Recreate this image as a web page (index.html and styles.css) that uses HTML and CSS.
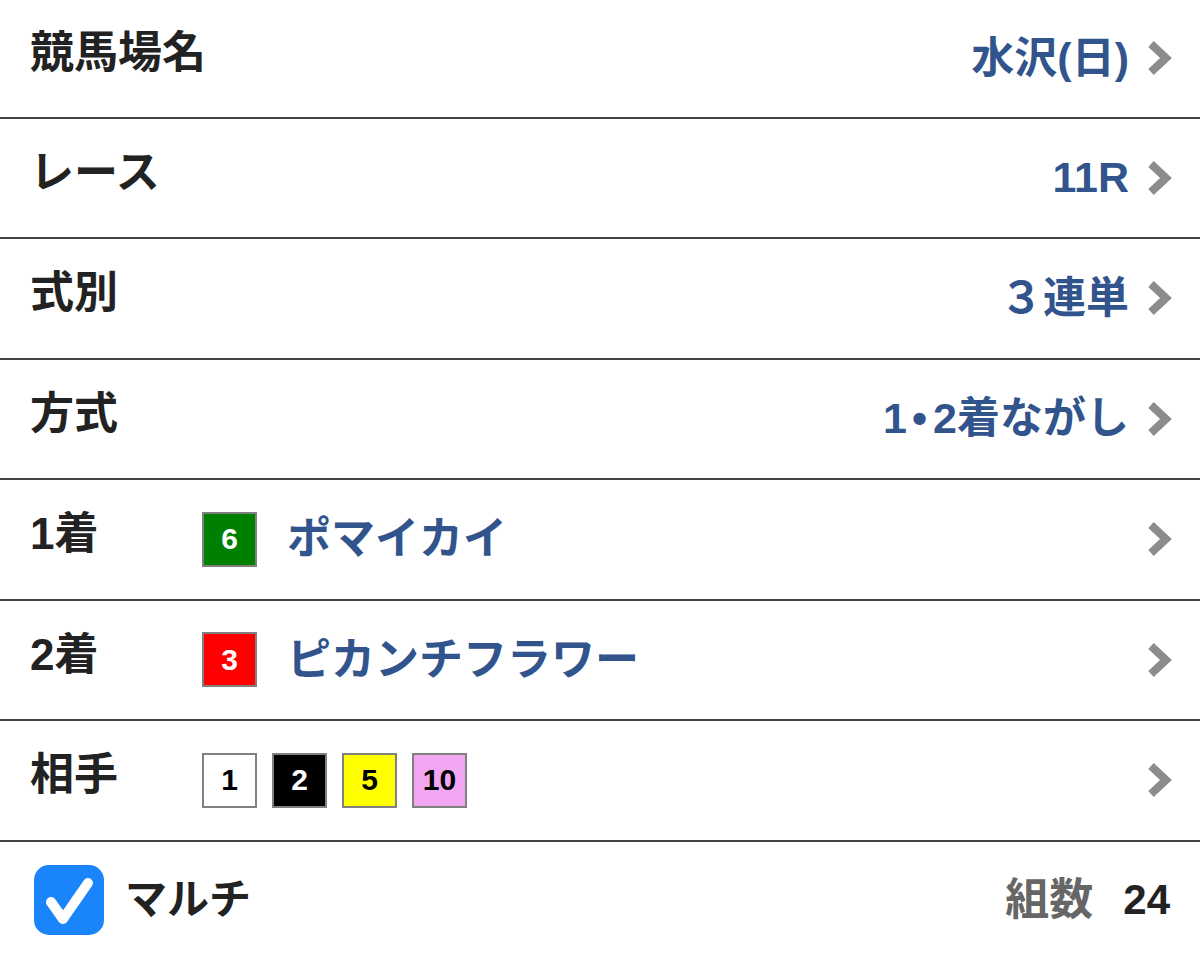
FILE: index.html
```html
<!DOCTYPE html>
<html lang="ja">
<head>
<meta charset="utf-8">
<title>投票内容</title>
<link rel="stylesheet" href="styles.css">
</head>
<body>
<div class="list">
  <div class="row row-first">
    <div class="label">競馬場名</div>
    <div class="value">水沢(日)</div>
    <svg class="chev" viewBox="0 0 27 36"><polyline points="5,4 20,18 5,32"/></svg>
  </div>
  <div class="row">
    <div class="label">レース</div>
    <div class="value">11R</div>
    <svg class="chev" viewBox="0 0 27 36"><polyline points="5,4 20,18 5,32"/></svg>
  </div>
  <div class="row">
    <div class="label">式別</div>
    <div class="value">３連単</div>
    <svg class="chev" viewBox="0 0 27 36"><polyline points="5,4 20,18 5,32"/></svg>
  </div>
  <div class="row">
    <div class="label">方式</div>
    <div class="value">1<span class="dot">•</span>2着ながし</div>
    <svg class="chev" viewBox="0 0 27 36"><polyline points="5,4 20,18 5,32"/></svg>
  </div>
  <div class="row">
    <div class="label">1着</div>
    <div class="horse">
      <span class="badge b-green">6</span>
      <span class="name">ポマイカイ</span>
    </div>
    <svg class="chev" viewBox="0 0 27 36"><polyline points="5,4 20,18 5,32"/></svg>
  </div>
  <div class="row">
    <div class="label">2着</div>
    <div class="horse">
      <span class="badge b-red">3</span>
      <span class="name">ピカンチフラワー</span>
    </div>
    <svg class="chev" viewBox="0 0 27 36"><polyline points="5,4 20,18 5,32"/></svg>
  </div>
  <div class="row">
    <div class="label">相手</div>
    <div class="badges">
      <span class="badge b-white">1</span>
      <span class="badge b-black">2</span>
      <span class="badge b-yellow">5</span>
      <span class="badge b-pink">10</span>
    </div>
    <svg class="chev" viewBox="0 0 27 36"><polyline points="5,4 20,18 5,32"/></svg>
  </div>
  <div class="row row-last">
    <div class="check">
      <svg viewBox="0 0 70 70"><rect x="0" y="0" width="70" height="70" rx="15" ry="15" fill="#1a84fb"/><polyline points="17,37 29,54 54,18" fill="none" stroke="#fff" stroke-width="10" stroke-linecap="round" stroke-linejoin="round"/></svg>
    </div>
    <div class="multi">マルチ</div>
    <div class="count"><span class="count-label">組数</span><span class="count-num">24</span></div>
  </div>
</div>
</body>
</html>
```
FILE: styles.css
```css
html, body {
  margin: 0;
  padding: 0;
  background: #ffffff;
}
body {
  font-family: "Liberation Sans", "Noto Sans CJK JP", sans-serif;
  font-weight: bold;
  color: #222222;
  width: 1200px;
  height: 957px;
  overflow: hidden;
}
.list {
  display: flex;
  flex-direction: column;
}
.row {
  display: flex;
  align-items: center;
  height: 120.5px;
  box-sizing: border-box;
  border-bottom: 2px solid #434343;
  padding: 0 27px 0 30px;
}
.row-first {
  height: 118.5px;
}
.row-last {
  border-bottom: none;
  height: 117.5px;
  padding: 0 30px 0 34px;
}
.label {
  font-size: 44px;
  line-height: 1;
  width: 172px;
  flex: none;
  white-space: nowrap;
  margin-bottom: 10px;
  color: #222222;
}
.value {
  margin-left: auto;
  font-size: 43px;
  line-height: 1;
  color: #32548c;
  white-space: nowrap;
}
.dot {
  padding: 0 6px 0 5px;
}
.chev {
  width: 27px;
  height: 36px;
  margin-left: 17px;
  flex: none;
}
.chev polyline {
  fill: none;
  stroke: #8c8c8c;
  stroke-width: 8;
}
.horse {
  display: flex;
  align-items: center;
  flex: 1;
}
.name {
  font-size: 44px;
  line-height: 1;
  color: #32548c;
  margin-left: 30px;
  white-space: nowrap;
}
.badges {
  display: flex;
  align-items: center;
  gap: 15px;
  flex: 1;
}
.badge {
  width: 55px;
  height: 55px;
  box-sizing: border-box;
  border: 2px solid #808080;
  display: flex;
  align-items: center;
  justify-content: center;
  font-family: "Liberation Sans", sans-serif;
  font-size: 30px;
  line-height: 1;
  flex: none;
}
.b-green { background: #008000; color: #ffffff; }
.b-red { background: #ff0000; color: #ffffff; }
.b-white { background: #ffffff; color: #000000; }
.b-black { background: #000000; color: #ffffff; }
.b-yellow { background: #ffff00; color: #000000; }
.b-pink { background: #f2a6f2; color: #000000; }
.check {
  width: 70px;
  height: 70px;
  flex: none;
}
.check svg {
  display: block;
  width: 70px;
  height: 70px;
}
.multi {
  margin-left: 21px;
  font-size: 42px;
  line-height: 1;
  color: #222222;
}
.count {
  margin-left: auto;
  display: flex;
  align-items: center;
  gap: 30px;
}
.count-label {
  font-size: 44px;
  line-height: 1;
  color: #666666;
}
.count-num {
  font-size: 42px;
  line-height: 1;
  color: #222222;
}
```
